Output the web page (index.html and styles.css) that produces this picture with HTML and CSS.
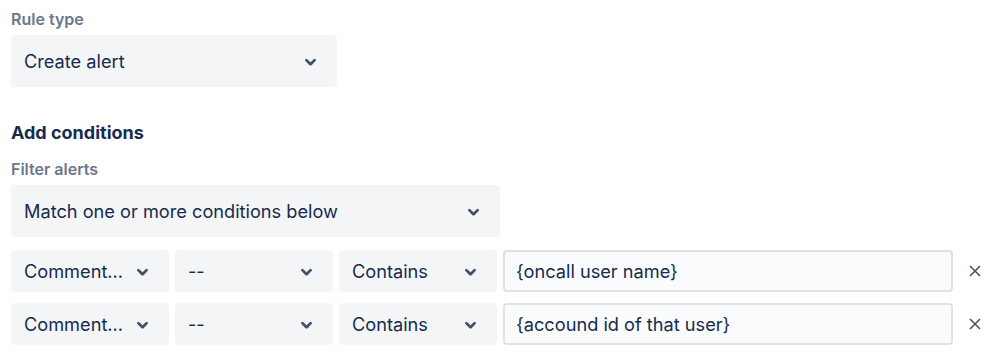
FILE: index.html
```html
<!DOCTYPE html>
<html lang="en">
<head>
    <meta charset="UTF-8">
    <meta name="viewport" content="width=device-width, initial-scale=1.0">
    <title>Rule settings</title>
    <link rel="stylesheet" href="styles.css">
</head>
<body>
    <div class="rule-form">
        <label class="field-label">Rule type</label>
        <div class="select select-rule">
            <span class="select-value">Create alert</span>
            <svg class="chevron" viewBox="0 0 24 24"><path d="M8.292 10.293a1.009 1.009 0 0 0 0 1.419l2.939 2.965c.218.215.5.322.779.322s.556-.107.769-.322l2.93-2.955a1.01 1.01 0 0 0 0-1.419.987.987 0 0 0-1.406 0l-2.298 2.317-2.307-2.327a.99.99 0 0 0-1.406 0z"/></svg>
        </div>

        <h2 class="section-title">Add conditions</h2>
        <label class="field-label">Filter alerts</label>
        <div class="select select-match">
            <span class="select-value">Match one or more conditions below</span>
            <svg class="chevron" viewBox="0 0 24 24"><path d="M8.292 10.293a1.009 1.009 0 0 0 0 1.419l2.939 2.965c.218.215.5.322.779.322s.556-.107.769-.322l2.93-2.955a1.01 1.01 0 0 0 0-1.419.987.987 0 0 0-1.406 0l-2.298 2.317-2.307-2.327a.99.99 0 0 0-1.406 0z"/></svg>
        </div>

        <div class="conditions">
            <div class="condition-row">
                <div class="select select-small">
                    <span class="select-value">Comment...</span>
                    <svg class="chevron" viewBox="0 0 24 24"><path d="M8.292 10.293a1.009 1.009 0 0 0 0 1.419l2.939 2.965c.218.215.5.322.779.322s.556-.107.769-.322l2.93-2.955a1.01 1.01 0 0 0 0-1.419.987.987 0 0 0-1.406 0l-2.298 2.317-2.307-2.327a.99.99 0 0 0-1.406 0z"/></svg>
                </div>
                <div class="select select-small">
                    <span class="select-value">--</span>
                    <svg class="chevron" viewBox="0 0 24 24"><path d="M8.292 10.293a1.009 1.009 0 0 0 0 1.419l2.939 2.965c.218.215.5.322.779.322s.556-.107.769-.322l2.93-2.955a1.01 1.01 0 0 0 0-1.419.987.987 0 0 0-1.406 0l-2.298 2.317-2.307-2.327a.99.99 0 0 0-1.406 0z"/></svg>
                </div>
                <div class="select select-small">
                    <span class="select-value">Contains</span>
                    <svg class="chevron" viewBox="0 0 24 24"><path d="M8.292 10.293a1.009 1.009 0 0 0 0 1.419l2.939 2.965c.218.215.5.322.779.322s.556-.107.769-.322l2.93-2.955a1.01 1.01 0 0 0 0-1.419.987.987 0 0 0-1.406 0l-2.298 2.317-2.307-2.327a.99.99 0 0 0-1.406 0z"/></svg>
                </div>
                <div class="text-input">{oncall user name}</div>
                <button class="remove-btn" aria-label="Remove">
                    <svg viewBox="0 0 12 12"><path d="M1 1 L11 11 M11 1 L1 11"/></svg>
                </button>
            </div>
            <div class="condition-row">
                <div class="select select-small">
                    <span class="select-value">Comment...</span>
                    <svg class="chevron" viewBox="0 0 24 24"><path d="M8.292 10.293a1.009 1.009 0 0 0 0 1.419l2.939 2.965c.218.215.5.322.779.322s.556-.107.769-.322l2.93-2.955a1.01 1.01 0 0 0 0-1.419.987.987 0 0 0-1.406 0l-2.298 2.317-2.307-2.327a.99.99 0 0 0-1.406 0z"/></svg>
                </div>
                <div class="select select-small">
                    <span class="select-value">--</span>
                    <svg class="chevron" viewBox="0 0 24 24"><path d="M8.292 10.293a1.009 1.009 0 0 0 0 1.419l2.939 2.965c.218.215.5.322.779.322s.556-.107.769-.322l2.93-2.955a1.01 1.01 0 0 0 0-1.419.987.987 0 0 0-1.406 0l-2.298 2.317-2.307-2.327a.99.99 0 0 0-1.406 0z"/></svg>
                </div>
                <div class="select select-small">
                    <span class="select-value">Contains</span>
                    <svg class="chevron" viewBox="0 0 24 24"><path d="M8.292 10.293a1.009 1.009 0 0 0 0 1.419l2.939 2.965c.218.215.5.322.779.322s.556-.107.769-.322l2.93-2.955a1.01 1.01 0 0 0 0-1.419.987.987 0 0 0-1.406 0l-2.298 2.317-2.307-2.327a.99.99 0 0 0-1.406 0z"/></svg>
                </div>
                <div class="text-input">{accound id of that user}</div>
                <button class="remove-btn" aria-label="Remove">
                    <svg viewBox="0 0 12 12"><path d="M1 1 L11 11 M11 1 L1 11"/></svg>
                </button>
            </div>
        </div>
    </div>
</body>
</html>
```

FILE: styles.css
```css
body {
    margin: 0;
    background-color: #fff;
    font-family: Inter, "Noto Sans", sans-serif;
    color: #172b4d;
}

.rule-form {
    display: flex;
    flex-direction: column;
    align-items: flex-start;
    padding: 8px 11px;
}

.field-label {
    display: block;
    font-size: 16px;
    font-weight: 600;
    line-height: 22px;
    color: #6b778c;
    margin-bottom: 5px;
}

.section-title {
    margin: 34px 0 13px;
    font-size: 18px;
    font-weight: 700;
    line-height: 24px;
}

.select {
    display: flex;
    align-items: center;
    justify-content: space-between;
    box-sizing: border-box;
    background-color: #f4f5f7;
    border-radius: 4px;
    padding: 0 10px 0 13px;
    font-size: 18.2px;
}

.select-rule {
    width: 326px;
    height: 52px;
}

.select-match {
    width: 489px;
    height: 52px;
}

.select-value {
    white-space: nowrap;
    overflow: hidden;
    text-overflow: ellipsis;
}

.chevron {
    width: 33px;
    height: 33px;
    flex-shrink: 0;
    fill: #42526e;
}

.conditions {
    display: flex;
    flex-direction: column;
    gap: 11px;
    margin-top: 13px;
}

.condition-row {
    display: flex;
    align-items: center;
    gap: 6px;
}

.select-small {
    width: 158px;
    height: 42px;
}

.text-input {
    box-sizing: border-box;
    width: 450px;
    height: 42px;
    display: flex;
    align-items: center;
    padding: 0 11px;
    border: 2px solid #dfe1e6;
    border-radius: 4px;
    background-color: #fafbfc;
    font-size: 18.2px;
}

.remove-btn {
    display: flex;
    align-items: center;
    justify-content: center;
    width: 32px;
    height: 32px;
    padding: 0;
    border: none;
    background: none;
    cursor: pointer;
}

.remove-btn svg {
    width: 12px;
    height: 12px;
    stroke: #42526e;
    stroke-width: 1.6;
    fill: none;
}
```
